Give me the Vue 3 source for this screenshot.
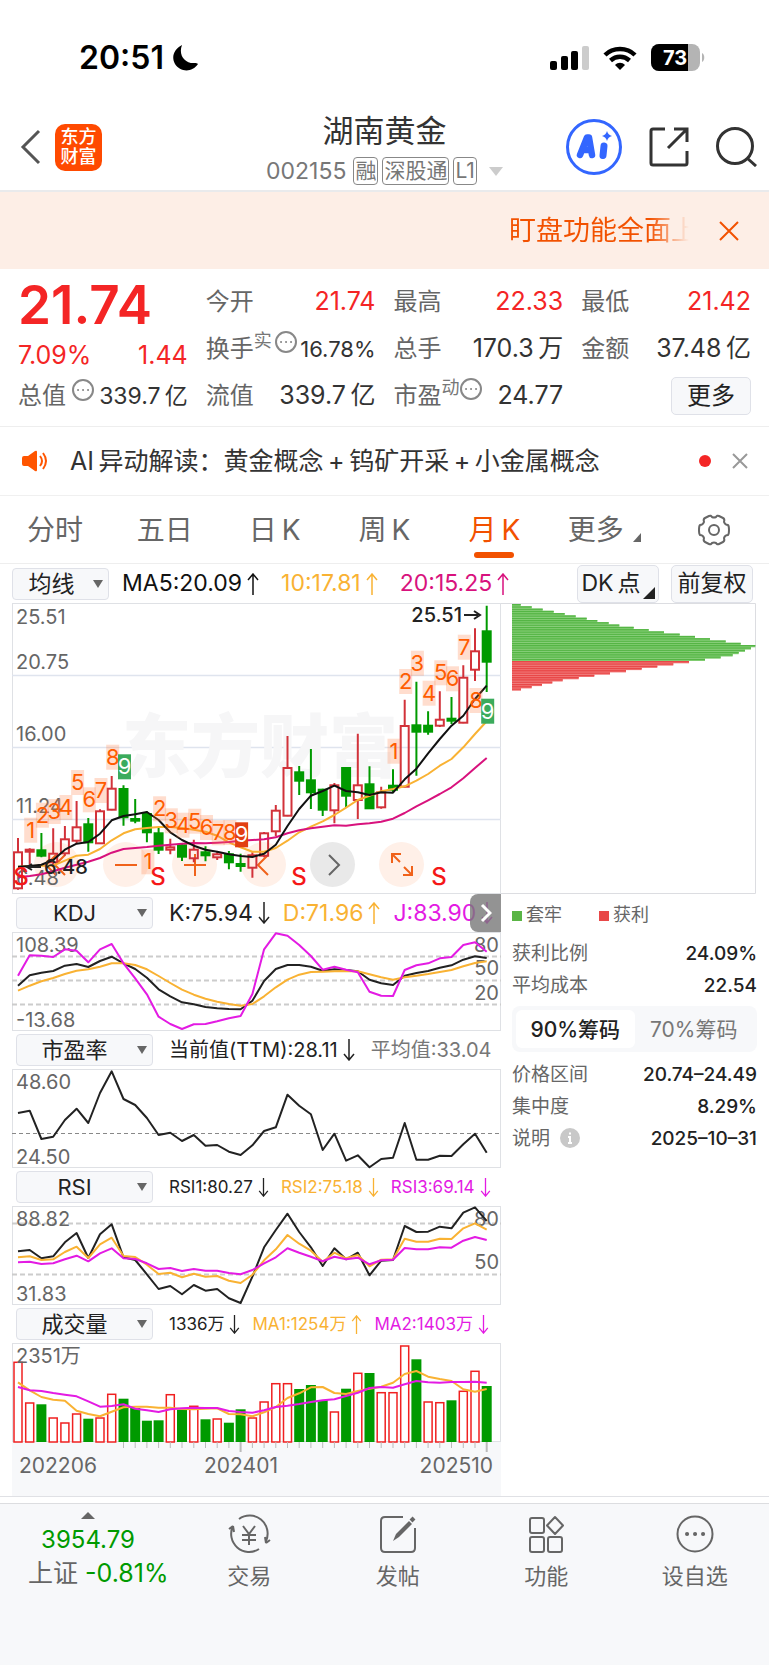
<script setup>
import { ref } from 'vue'

const COUNT = 41
const cx = (i) => 6 + (i * 468.7) / (COUNT - 1)
const fix = (n) => Math.round(n * 10) / 10
const toLine = (values, offset) =>
  values.map((v, i) => `${fix(cx(i))},${fix(v / 3 - offset)}`).join(' ')

// high, body top, body bottom, low, direction
const candleData = [
  [717, 760, 868, 872, 1], [748, 752, 758, 797, 1], [702, 754, 770, 775, 0], [688, 764, 790, 800, 1],
  [681, 721, 763, 770, 1], [606, 685, 725, 735, 1], [657, 676, 730, 758, 0], [631, 637, 733, 735, 1],
  [531, 569, 632, 634, 1], [559, 570, 655, 680, 0], [600, 660, 665, 673, 0], [637, 645, 700, 730, 0],
  [686, 703, 752, 765, 0], [719, 745, 752, 766, 1], [735, 739, 773, 786, 0], [722, 752, 778, 790, 1],
  [742, 760, 769, 787, 0], [758, 766, 775, 783, 1], [756, 766, 790, 811, 0], [764, 795, 801, 818, 0],
  [760, 769, 806, 836, 1], [699, 703, 770, 775, 1], [618, 635, 697, 712, 1], [411, 507, 650, 652, 1],
  [501, 520, 545, 588, 0], [450, 544, 580, 630, 0], [569, 572, 632, 651, 0], [552, 559, 634, 673, 1],
  [506, 507, 590, 627, 0], [404, 559, 603, 660, 1], [502, 556, 628, 629, 0], [563, 580, 625, 629, 1],
  [511, 560, 572, 580, 0], [302, 381, 563, 565, 1], [248, 379, 398, 530, 0], [337, 380, 398, 407, 0],
  [277, 362, 380, 384, 1], [294, 359, 365, 375, 0], [199, 236, 371, 373, 1], [88, 157, 212, 246, 1],
  [20, 97, 188, 279, 0],
]
const py = (v) => fix(v / 3 - 4)
const candles = candleData.map(([h, t, b, l, up], i) => ({
  x: fix(cx(i)), h: py(h), t: py(t), b: py(b), l: py(l), up: !!up,
}))

const priceLines = [
  { color: '#f9b233', pts: toLine([803, 801, 800, 800, 785, 770, 767, 750, 724, 703, 691, 687, 684, 684, 687, 692, 698, 710, 730, 745, 758, 758, 747, 725, 700, 683, 667, 648, 626, 603, 590, 577, 570, 562, 545, 525, 500, 480, 445, 405, 367], 4) },
  { color: '#d8127d', pts: toLine([835, 831, 826, 817, 806, 797, 788, 777, 761, 750, 747, 744, 740, 737, 734, 732, 733, 731, 729, 725, 723, 721, 715, 703, 694, 688, 683, 679, 680, 676, 673, 668, 659, 642, 622, 604, 585, 565, 538, 507, 477], 4) },
  { color: '#111', pts: toLine([803, 801, 797, 783, 752, 734, 729, 704, 664, 651, 646, 639, 663, 700, 723, 740, 752, 758, 766, 771, 774, 764, 737, 681, 630, 590, 576, 560, 576, 580, 588, 580, 581, 541, 509, 463, 420, 380, 350, 300, 260], 4) },
]

const marks = [
  [1, '1', 692], [2, '2', 647], [3, '3', 636], [4, '4', 624], [5, '5', 549], [6, '6', 601], [7, '7', 573],
  [8, '8', 473], [9, '9', 502, 'g'], [11, '1', 787], [12, '2', 628], [13, '3', 664], [14, '4', 677],
  [15, '5', 665], [16, '6', 684], [17, '7', 700], [18, '8', 699], [19, '9', 706, 'r'], [32, '1', 455],
  [33, '2', 246], [34, '3', 191], [35, '4', 281], [36, '5', 220], [37, '6', 238], [38, '7', 143],
  [39, '8', 303], [40, '9', 335, 'g'],
].map(([i, n, y, kind]) => ({ x: fix(cx(i) + 1), n, y: py(y), kind: kind || 'n' }))

const priceLabels = [['25.51', 21], ['20.75', 66], ['16.00', 138], ['11.24', 210], ['6.48', 282]]
const signals = [9, 146, 287, 427]

const panels = [
  {
    id: 'kdj', name: 'KDJ', size: 'lg', more: true,
    legend: [['K:75.94', 'down', 'dark'], ['D:71.96', 'up', 'amber'], ['J:83.90', 'down', 'violet']],
    dashes: [[24, 'd'], [48, 'd'], [72, 'd']],
    left: [['108.39', 20], ['-13.68', 95]],
    right: [['80', 20], ['50', 43], ['20', 68]],
    lines: [
      { color: '#222', pts: toLine([272, 241, 233, 228, 212, 207, 216, 198, 185, 205, 222, 248, 283, 304, 322, 328, 336, 340, 342, 343, 317, 258, 222, 210, 210, 215, 227, 223, 225, 229, 254, 265, 270, 242, 234, 228, 218, 211, 194, 184, 189], 37) },
      { color: '#f9b233', pts: toLine([287, 272, 259, 249, 237, 227, 223, 215, 205, 205, 210, 223, 243, 264, 284, 299, 311, 320, 327, 332, 327, 304, 277, 254, 239, 231, 230, 229, 228, 229, 238, 247, 254, 247, 242, 237, 231, 225, 214, 204, 199], 37) },
      { color: '#e31be3', pts: toLine([242, 181, 182, 186, 163, 167, 202, 163, 147, 205, 250, 298, 365, 387, 402, 388, 387, 379, 370, 363, 297, 163, 115, 122, 150, 183, 224, 215, 224, 232, 290, 302, 303, 225, 211, 205, 190, 186, 150, 142, 170], 37) },
    ],
  },
  {
    id: 'pe', name: '市盈率', size: 'md',
    legend: [['当前值(TTM):28.11', 'down', 'dark'], ['平均值:33.04', '', 'gray']],
    dashes: [[64, 'f']],
    left: [['48.60', 20], ['24.50', 95]],
    right: [],
    lines: [
      { color: '#222', pts: toLine([654, 647, 732, 725, 675, 641, 684, 594, 529, 612, 630, 669, 720, 713, 738, 720, 752, 750, 770, 780, 751, 708, 697, 599, 632, 658, 765, 716, 797, 781, 817, 792, 788, 684, 794, 794, 782, 783, 748, 716, 773], 174) },
    ],
  },
  {
    id: 'rsi', name: 'RSI', size: 'sm',
    legend: [['RSI1:80.27', 'down', 'dark'], ['RSI2:75.18', 'down', 'amber'], ['RSI3:69.14', 'down', 'violet']],
    dashes: [[17, 'd'], [68, 'd']],
    left: [['88.82', 20], ['31.83', 95]],
    right: [['80', 20], ['50', 63]],
    lines: [
      { color: '#222', pts: toLine([244, 240, 265, 259, 217, 189, 264, 193, 163, 262, 270, 313, 357, 348, 373, 345, 362, 357, 385, 399, 320, 232, 180, 131, 186, 232, 288, 235, 268, 248, 316, 272, 270, 168, 186, 185, 170, 175, 128, 112, 153], 36) },
      { color: '#f9b233', pts: toLine([262, 259, 270, 268, 246, 230, 264, 223, 203, 258, 261, 284, 312, 308, 322, 311, 320, 318, 332, 339, 314, 271, 238, 195, 221, 242, 275, 248, 265, 255, 289, 269, 268, 206, 215, 215, 206, 207, 175, 160, 179], 36) },
      { color: '#e31be3', pts: toLine([277, 275, 282, 280, 268, 257, 274, 250, 235, 265, 267, 280, 297, 294, 303, 297, 302, 302, 309, 313, 300, 280, 262, 235, 248, 260, 274, 260, 268, 263, 283, 271, 269, 234, 238, 238, 232, 233, 212, 201, 210], 36) },
    ],
  },
  {
    id: 'vol', name: '成交量', size: 'sm',
    legend: [['1336万', 'down', 'dark'], ['MA1:1254万', 'up', 'amber'], ['MA2:1403万', 'down', 'violet']],
    dashes: [],
    left: [['2351万', 20]],
    right: [],
    bars: [
      574, 696, 703, 741, 756, 729, 746, 741, 670, 686, 714, 752, 751, 671, 719, 706, 748, 744, 758, 718, 741,
      693, 638, 638, 657, 645, 690, 723, 656, 607, 609, 665, 665, 525, 568, 693, 695, 691, 661, 601, 648,
    ].map((v, i) => ({
      x: fix(cx(i)), y: fix(v / 3 - 173),
      up: ![2, 6, 9, 10, 11, 12, 14, 16, 18, 19, 24, 25, 26, 28, 30, 34, 37, 40].includes(i),
    })),
    lines: [
      { color: '#f9b233', pts: toLine([637, 661, 681, 689, 692, 722, 732, 739, 725, 712, 710, 710, 713, 713, 717, 718, 716, 715, 732, 733, 739, 727, 711, 684, 670, 652, 651, 669, 672, 663, 656, 650, 638, 612, 603, 620, 627, 633, 658, 665, 657], 173) },
      { color: '#e31be3', pts: toLine([651, 661, 663, 669, 674, 679, 694, 710, 708, 703, 716, 721, 726, 718, 715, 713, 714, 714, 723, 726, 728, 721, 711, 707, 702, 696, 691, 688, 678, 668, 654, 651, 653, 643, 633, 637, 638, 636, 636, 635, 638], 173) },
    ],
  },
]

const ticks = Array.from({ length: 32 }, (_, k) => k + 9).map((i) => ({
  x: fix(cx(i)), h: i === 19 || i === 40 ? 10 : 6,
}))

const chipEnds = [62, 95, 128, 161, 194, 227, 260, 292, 326, 358, 401, 446, 492, 539, 585, 630, 677, 722, 766, 753, 735, 716, 698, 662, 615, 567, 520, 472, 425, 378, 330, 283, 236, 188, 157, 126, 95, 63]
const chips = chipEnds.map((e, i) => ({ y: fix(1 + i * 2.28), w: fix((e - 36) / 3), red: i > 24 }))

const tabs = ['分时', '五日', '日\u2009K', '周\u2009K', '月\u2009K']
const activeTab = ref(tabs[4])
const chipTab = ref('90%筹码')
</script>

<template>
  <main class="app">
    <div class="status">
      <div class="clock">
        <span>20:51</span>
        <svg width="27" height="28" viewBox="0 0 27 28"><path d="M10 1C2 5-1 13 3 20c5 8 17 9 23 0-1-1-2-1-3-1C13 20 6 11 10 1Z" fill="#000" /></svg>
      </div>
      <div class="radios">
        <svg width="39" height="24" viewBox="0 0 39 24">
          <rect x="0" y="15" width="7" height="9" rx="2" /><rect x="11" y="10" width="7" height="14" rx="2" />
          <rect x="21" y="5" width="7" height="19" rx="2" /><rect x="32" y="0" width="7" height="24" rx="2" fill="#ccc" />
        </svg>
        <svg width="34" height="24" viewBox="0 0 34 24" fill="none" stroke="#000" stroke-width="4.4">
          <path d="M2 9C10 1 24 1 32 9" /><path d="M7.500 14.500C13 9.500 21 9.500 26.500 14.500" />
          <path d="M17 24l-5-5c3-3 7-3 10 0Z" fill="#000" stroke="none" />
        </svg>
        <svg class="battery" width="54" height="28" viewBox="0 0 54 28">
          <defs><clipPath id="cell"><rect width="49" height="27" rx="8" /></clipPath></defs>
          <g clip-path="url(#cell)"><rect width="49" height="27" fill="#b4b4b4" /><rect width="37" height="27" /></g>
          <path d="M51 9c3 1 3 8 0 9Z" fill="#b4b4b4" />
          <text x="24" y="21" text-anchor="middle">73</text>
        </svg>
      </div>
    </div>

    <header class="head">
      <div class="head-left">
        <button class="plain" aria-label="返回">
          <svg width="22" height="36" viewBox="0 0 22 36" fill="none" stroke="#555" stroke-width="3"><path d="M19 2L3 18l16 16" /></svg>
        </button>
        <a class="logo" href="#"><span>东方</span><span>财富</span></a>
      </div>
      <div class="title">
        <h1>湖南黄金</h1>
        <div class="code">
          <span>002155</span><i>融</i><i>深股通</i><i>L1</i>
          <svg width="14" height="9" viewBox="0 0 14 9"><path d="M0 0h14L7 9Z" fill="#ccc" /></svg>
        </div>
      </div>
      <div class="head-right">
        <button class="plain" aria-label="Ai">
          <svg width="56" height="56" viewBox="0 0 56 56">
            <circle cx="28" cy="28" r="26.500" fill="none" stroke="#3366ff" stroke-width="3" />
            <g fill="none" stroke="#3366ff" stroke-width="6.500" stroke-linejoin="round" stroke-linecap="round">
              <path d="M14 36L21 18.500h2L26 36M17 31h8" /><path d="M38 27l-1 9.500" stroke-width="7" />
            </g>
            <path d="M41 12q1 4 5 5-4 1-5 5-1-4-5-5 4-1 5-5Z" fill="#3366ff" />
          </svg>
        </button>
        <button class="plain" aria-label="分享">
          <svg width="40" height="40" viewBox="0 0 40 40" fill="none" stroke="#333" stroke-width="3">
            <path d="M16 2H4q-2 0-2 2v32q0 2 2 2h32q2 0 2-2V24M25 2h13v13M38 2L19 21" />
          </svg>
        </button>
        <button class="plain" aria-label="搜索">
          <svg width="41" height="40" viewBox="0 0 41 40" fill="none" stroke="#333" stroke-width="3"><circle cx="19" cy="19" r="17.500" /><path d="M31 31l9 8" /></svg>
        </button>
      </div>
    </header>

    <div class="banner">
      <span>盯盘功能全面上</span>
      <button class="plain" aria-label="关闭提示">
        <svg width="20" height="20" viewBox="0 0 20 20" stroke="#f25100" stroke-width="2"><path d="M1 1l18 18M19 1L1 19" /></svg>
      </button>
    </div>

    <section class="quote">
      <div class="col first">
        <strong>21.74</strong>
        <p class="red"><b>7.09%</b><b>1.44</b></p>
        <p class="tight">
          <span>总值</span>
          <svg class="dots" viewBox="0 0 22 22"><circle cx="11" cy="11" r="10" /><path d="M6 11h.1M11 11h.1M16 11h.1" /></svg>
          <b>339.7&#8201;亿</b>
        </p>
      </div>
      <div class="col">
        <p class="red"><span>今开</span><b>21.74</b></p>
        <p class="tight">
          <span>换手<sup>实</sup></span>
          <svg class="dots" viewBox="0 0 22 22"><circle cx="11" cy="11" r="10" /><path d="M6 11h.1M11 11h.1M16 11h.1" /></svg>
          <b>16.78%</b>
        </p>
        <p><span>流值</span><b>339.7&#8201;亿</b></p>
      </div>
      <div class="col">
        <p class="red"><span>最高</span><b>22.33</b></p>
        <p><span>总手</span><b>170.3&#8201;万</b></p>
        <p class="tight full">
          <span>市盈<sup>动</sup></span>
          <svg class="dots" viewBox="0 0 22 22"><circle cx="11" cy="11" r="10" /><path d="M6 11h.1M11 11h.1M16 11h.1" /></svg>
          <b>24.77</b>
        </p>
      </div>
      <div class="col">
        <p class="red"><span>最低</span><b>21.42</b></p>
        <p><span>金额</span><b>37.48&#8201;亿</b></p>
        <p class="end"><button class="box more">更多</button></p>
      </div>
    </section>

    <div class="notice">
      <svg width="26" height="22" viewBox="0 0 26 22">
        <path d="M0 8q0-2 2-2h4l7-5q2-1 2 1v18q0 2-2 1l-7-5H2q-2 0-2-2Z" fill="#ff5500" />
        <path d="M18 6q4 5 0 10M21 3q6 8 0 16" fill="none" stroke="#ff5500" stroke-width="2" />
      </svg>
      <p>AI&#8201;异动解读：黄金概念&#8201;+&#8201;钨矿开采&#8201;+&#8201;小金属概念</p>
      <i></i>
      <button class="plain" aria-label="关闭">
        <svg width="16" height="16" viewBox="0 0 16 16" stroke="#999" stroke-width="2"><path d="M1 1l14 14M15 1L1 15" /></svg>
      </button>
    </div>

    <nav class="tabs">
      <button v-for="t in tabs" :key="t" :class="{ on: t === activeTab }" @click="activeTab = t">{{ t }}</button>
      <button>更多<svg class="corner" width="8" height="9" viewBox="0 0 8 9"><path d="M8 0v9H0Z" fill="#666" /></svg></button>
      <button aria-label="设置">
        <svg width="34" height="32" viewBox="0 0 34 32" fill="none" stroke="#666" stroke-width="2" stroke-linejoin="round">
          <path d="M12 2q2-1 3 1 2 1 4 0 1-2 3-1l4 2q2 1 1 4 1 3 4 3 1 1 1 5t-1 5q-3 0-4 3 1 3-1 4l-4 2q-2 1-3-1-2-1-4 0-1 2-3 1l-4-2q-2-1-1-4-1-3-4-3-1-1-1-5t1-5q3 0 4-3-1-3 1-4Z" />
          <circle cx="17" cy="16" r="5" />
        </svg>
      </button>
    </nav>

    <div class="indicators">
      <label class="pick small"><select aria-label="均线"><option>均线</option></select></label>
      <div class="legend ma">
        <span class="black">MA5:20.09<svg class="arr" viewBox="0 0 12 22"><path d="M6 22V1M1 7l5-6 5 6" /></svg></span>
        <span class="amber">10:17.81<svg class="arr" viewBox="0 0 12 22"><path d="M6 22V1M1 7l5-6 5 6" /></svg></span>
        <span class="pink">20:15.25<svg class="arr" viewBox="0 0 12 22"><path d="M6 22V1M1 7l5-6 5 6" /></svg></span>
      </div>
      <button class="box dk">DK&#8201;点<svg width="12" height="12" viewBox="0 0 12 12"><path d="M12 0v12H0Z" fill="#222" /></svg></button>
      <button class="box fq">前复权</button>
    </div>

    <section class="board">
      <div class="charts">
        <div class="main-chart">
          <div class="tools">
            <button aria-label="最左"><svg viewBox="0 0 45 45"><path d="M22 13L12 23l10 10M31 13L21 23l10 10" /></svg></button>
            <button aria-label="缩小"><svg viewBox="0 0 45 45"><path d="M12 23h22" /></svg></button>
            <button aria-label="放大"><svg viewBox="0 0 45 45"><path d="M12 23h22M23 12v22" /></svg></button>
            <button aria-label="左移"><svg viewBox="0 0 45 45"><path d="M27 13L17 23l10 10" /></svg></button>
            <button class="off" aria-label="右移"><svg viewBox="0 0 45 45"><path d="M19 13l10 10-10 10" /></svg></button>
            <button aria-label="全屏"><svg viewBox="0 0 45 45"><path d="M13 21v-9h9M13 12l8 8M33 24v9h-9M33 33l-8-8" /></svg></button>
          </div>
          <svg class="plot" viewBox="0 0 489 291">
            <rect x=".5" y=".5" width="488" height="290" class="frame" />
            <path d="M0 72.500H489M0 144.500H489M0 216.500H489" stroke="#dfe4ee" stroke-width="1.500" />
            <text class="mark-bg" x="248" y="169" text-anchor="middle">东方财富</text>
            <text v-for="[t, y] in priceLabels" :key="t" class="axis" x="4" :y="y">{{ t }}</text>
            <g v-for="(c, i) in candles" :key="i" :stroke="c.up ? '#d2323a' : '#009a00'" stroke-width="2">
              <path :d="`M${c.x} ${c.h}V${c.t}M${c.x} ${c.b}V${c.l}`" />
              <rect :x="c.x - 4" :y="c.t" width="8" :height="Math.max(1, c.b - c.t)" :fill="c.up ? 'none' : '#009a00'" />
            </g>
            <polyline v-for="l in priceLines" :key="l.color" :points="l.pts" :stroke="l.color" class="line" />
            <g v-for="m in marks" :key="m.x" :class="['num', m.kind]">
              <rect :x="m.x - 6.5" :y="m.y - 12" width="13" height="25" />
              <text :x="m.x" :y="m.y + 8" text-anchor="middle">{{ m.n }}</text>
            </g>
            <text class="peak" x="32" y="271">6.48</text>
            <path d="M29 264H16M20 261l-5 3 5 3" fill="none" stroke="#222" stroke-width="2" />
            <text class="peak" x="450" y="19" text-anchor="end">25.51</text>
            <path d="M452 12H466M462 8l6 4-6 4" fill="none" stroke="#222" stroke-width="2" />
            <text v-for="x in signals" :key="x" class="sig" :x="x" y="282" text-anchor="middle">S</text>
          </svg>
        </div>

        <div v-for="p in panels" :key="p.id" class="panel">
          <div class="panel-head">
            <label class="pick"><select :aria-label="p.name"><option>{{ p.name }}</option></select></label>
            <div :class="['legend', p.size]">
              <span v-for="[t, dir, color] in p.legend" :key="t" :class="color">{{ t
                }}<svg v-if="dir" class="arr" viewBox="0 0 12 22"><path :d="dir === 'up' ? 'M6 22V1M1 7l5-6 5 6' : 'M6 0V21M1 15l5 6 5-6'" /></svg></span>
            </div>
            <button v-if="p.more" class="next" aria-label="更多指标">
              <svg width="12" height="20" viewBox="0 0 12 20" fill="none" stroke="#fff" stroke-width="3"><path d="M2 2l8 8-8 8" /></svg>
            </button>
          </div>
          <svg class="plot" viewBox="0 0 489 99">
            <rect x=".5" y=".5" width="488" height="98" class="frame" />
            <path v-for="[y, k] in p.dashes" :key="y" :d="`M0 ${y + 0.5}H489`" :class="k === 'd' ? 'dash' : 'dash fine'" />
            <template v-if="p.bars">
              <g v-for="b in p.bars" :key="b.x">
                <rect v-if="b.up" :x="b.x - 4" :y="b.y + 1" width="8" :height="98 - b.y" fill="#fff" stroke="#f02020" stroke-width="1.500" />
                <rect v-else :x="b.x - 5" :y="b.y" width="10" :height="99 - b.y" fill="#009a00" />
              </g>
            </template>
            <text v-for="[t, y] in p.left" :key="t" class="axis" x="4" :y="y">{{ t }}</text>
            <text v-for="[t, y] in p.right" :key="t" class="axis" x="487" :y="y" text-anchor="end">{{ t }}</text>
            <polyline v-for="l in p.lines" :key="l.color" :points="l.pts" :stroke="l.color" class="line" />
          </svg>
        </div>

        <div class="dates">
          <svg class="plot" viewBox="0 0 489 44">
            <path v-for="t in ticks" :key="t.x" :d="`M${t.x} 0v${t.h}`" stroke="#bbb" :stroke-width="t.h > 6 ? 2 : 1" />
            <text x="7" y="31">202206</text>
            <text x="229" y="31" text-anchor="middle">202401</text>
            <text x="481" y="31" text-anchor="end">202510</text>
          </svg>
        </div>
      </div>

      <aside class="side">
        <svg class="plot" viewBox="0 0 256 291">
          <path d="M0 .5H254.500V290.500H0" fill="none" stroke="#dcdde1" />
          <g v-for="c in chips" :key="c.y">
            <rect x="11" :y="c.y" :width="c.w" height="2.300" :fill="c.red ? '#f07070' : '#80cc70'" />
            <rect x="11" :y="c.y" :width="c.w" height="1.300" :fill="c.red ? '#e84848' : '#55b545'" />
          </g>
        </svg>
        <div class="side-body">
          <div class="key"><span class="g">套牢</span><span class="r">获利</span></div>
          <dl>
            <div><dt>获利比例</dt><dd>24.09%</dd></div>
            <div><dt>平均成本</dt><dd>22.54</dd></div>
          </dl>
          <div class="seg">
            <button v-for="s in ['90%筹码', '70%筹码']" :key="s" :class="{ on: s === chipTab }" @click="chipTab = s">{{ s }}</button>
          </div>
          <dl>
            <div><dt>价格区间</dt><dd>20.74–24.49</dd></div>
            <div><dt>集中度</dt><dd>8.29%</dd></div>
            <div><dt>说明 <svg width="20" height="20" viewBox="0 0 20 20"><circle cx="10" cy="10" r="10" fill="#c8c8c8" /><path d="M10 4.500v2M8 9h2v6M8 15h4" stroke="#fff" stroke-width="2" fill="none" /></svg></dt><dd>2025–10–31</dd></div>
          </dl>
        </div>
      </aside>
    </section>

    <footer class="foot">
      <a class="index" href="#">
        <svg viewBox="0 0 120 7"><path d="M53 7h14L60 0Z" fill="#666" /></svg>
        <b class="value">3954.79</b>
        <span>上证 <b>-0.81%</b></span>
      </a>
      <a href="#">
        <svg viewBox="0 0 44 40"><path d="M12 5a18 18 0 0 1 27 22M39 29l4-3M39 29l-1-6M32 35A18 18 0 0 1 6 12M6 12l-4 3M6 12l1 6" /><path d="M16 12l6 8 6-8M22 20v11M15 21h14M15 26h14" /></svg>
        <span>交易</span>
      </a>
      <a href="#">
        <svg viewBox="0 0 44 40"><path d="M27 3H9q-4 0-4 4v27q0 4 4 4h26q4 0 4-4V14" /><path d="M17 27l3-7L33 7l3 3-13 13Z" fill="#666" stroke="none" /><path d="M35 7l3-3" stroke-width="4" /></svg>
        <span>发帖</span>
      </a>
      <a href="#">
        <svg viewBox="0 0 44 40"><rect x="6" y="4" width="14" height="15" rx="2" /><rect x="6" y="23" width="14" height="15" rx="2" /><rect x="24" y="23" width="14" height="15" rx="2" /><path d="M31 3l8 8.500-8 8.500-8-8.500Z" stroke-linejoin="round" /></svg>
        <span>功能</span>
      </a>
      <a href="#">
        <svg viewBox="0 0 44 40"><circle cx="22" cy="20" r="17.500" /><path d="M14 20h.1M22 20h.1M30 20h.1" stroke-width="4" stroke-linecap="round" /></svg>
        <span>设自选</span>
      </a>
    </footer>
  </main>
</template>

<style>
body { background: #fff; }
</style>

<style scoped>
.app { font-family: Inter, "Noto Sans CJK SC", sans-serif; color: #333; font-size: 24px; line-height: 1; display: flex; flex-direction: column; min-height: 100vh; }
h1, p, dl, dd { margin: 0; font-weight: 400; }
b, i { font-weight: 400; font-style: normal; }
a { color: inherit; text-decoration: none; }
svg { display: block; flex: none; }
button { font: inherit; color: inherit; cursor: pointer; padding: 0; border: 0; background: none; }

.status { height: 96px; box-sizing: border-box; padding: 20px 64px 0 79px; display: flex; justify-content: space-between; align-items: center; }
.clock { display: flex; align-items: center; gap: 8px; font-size: 32px; font-weight: 600; color: #000; }
.radios { display: flex; align-items: center; gap: 14px; }
.battery text { font-size: 20px; font-weight: 700; fill: #fff; }

.head { display: grid; grid-template-columns: 1fr auto 1fr; align-items: center; height: 94px; border-bottom: 2px solid #e9eaec; padding: 0 12px; }
.head-left { display: flex; align-items: center; gap: 13px; padding: 8px 0 0 8px; }
.logo { display: flex; flex-direction: column; justify-content: center; align-items: center; gap: 2px; width: 47px; height: 47px; border-radius: 10px; background: #ff4a00; color: #fff; font-size: 18px; font-weight: 500; }
.title { display: flex; flex-direction: column; align-items: center; gap: 8px; padding-top: 12px; }
h1 { font-size: 31px; line-height: 36px; }
.code { display: flex; align-items: center; gap: 4px; color: #777; font-size: 23px; }
.code span { margin-right: 3px; }
.code i { border: 1px solid #888; border-radius: 4px; font-size: 21px; line-height: 26px; padding: 0 1px; }
.code svg { margin-left: 8px; }
.head-right { display: flex; align-items: center; justify-content: flex-end; gap: 27px; padding-top: 8px; }

.banner { height: 77px; background: #fdeee6; display: flex; align-items: center; justify-content: flex-end; gap: 30px; padding-right: 30px; }
.banner span { font-size: 27px; width: 180px; overflow: hidden; white-space: nowrap; line-height: 36px; color: transparent; background: linear-gradient(90deg, #f25100 78%, rgba(242, 81, 0, 0) 100%); background-clip: text; }

.quote { display: grid; grid-template-columns: repeat(4, minmax(0, 1fr)); gap: 18px; padding: 9px 18px 7px; border-bottom: 1px solid #eee; }
.col p { height: 47px; display: flex; align-items: center; justify-content: space-between; white-space: nowrap; }
.col span { color: #666; }
.col p b { font-size: 25px; }
.col p.red b { color: #f42525; }
.first strong { display: block; font-size: 53px; line-height: 54px; height: 54px; font-weight: 600; color: #f42525; }
.col.first p { height: 46px; }
.col.first .tight { height: 36px; }
.col .tight b { font-size: 22px; }
.col.first .tight b { font-size: 23px; }
.col .full b { font-size: 25px; margin-left: auto; }
.tight span { display: flex; }
sup { font-size: 18px; line-height: 18px; color: #777; vertical-align: baseline; align-self: flex-start; margin-top: -5px; }
.dots { width: 22px; height: 22px; fill: none; stroke: #888; stroke-width: 2; align-self: flex-start; stroke-linecap: round; margin-top: 6px; }
.first .dots { margin-top: 1px; }
.col p.end { justify-content: flex-end; }
.box { border: 1px solid #dfe1e8; border-radius: 5px; background: #f7f8fa; color: #222; height: 38px; }
.more { width: 80px; }

.notice { height: 68px; border-bottom: 1px solid #f0f0f0; display: flex; align-items: center; padding: 0 21px 0 22px; }
.notice p { flex: 1; margin-left: 22px; font-size: 25px; white-space: nowrap; }
.notice i { width: 12px; height: 12px; border-radius: 6px; background: #f42525; margin-right: 21px; }

.tabs { display: grid; grid-template-columns: repeat(7, 1fr); height: 67px; border-bottom: 1px solid #eee; }
.tabs button { font-size: 28px; color: #666; display: flex; align-items: center; justify-content: center; position: relative; white-space: nowrap; }
.tabs .on { color: #f25100; }
.tabs .on::after { content: ""; position: absolute; bottom: 5px; width: 40px; height: 6px; border-radius: 3px; background: #f25100; }
.corner { align-self: flex-end; margin: 0 0 21px 9px; }

.indicators { display: flex; align-items: center; padding: 0 16px 0 12px; height: 39px; }
.pick { position: relative; display: block; width: 137px; height: 32px; margin-left: 4px; flex: none; }
.pick select { appearance: none; box-sizing: border-box; width: 100%; height: 100%; border: 1px solid #dfe1e8; border-radius: 4px; background: #f7f8fa; font: inherit; font-size: 22px; line-height: 28px; color: #222; padding: 0 20px 0 0; text-align: center; text-align-last: center; }
.pick::after { content: ""; position: absolute; right: 6px; top: 12px; border: 5px solid transparent; border-top: 8px solid #666; border-bottom: 0; }
.small { width: 97px; margin-left: 0; }
.small select { font-size: 23px; padding: 0 18px 0 0; }
.legend { display: flex; align-items: center; white-space: nowrap; margin-left: 16px; gap: 12px; flex: 1; }
.legend span { display: flex; align-items: center; }
.legend.ma { font-size: 23px; gap: 22px; margin-left: 13px; }
.legend.lg { font-size: 23px; gap: 13px; }
.legend.md { font-size: 20px; gap: 16px; }
.legend.sm { font-size: 17px; }
.arr { width: 12px; height: 22px; fill: none; stroke: currentColor; stroke-width: 1.5; margin-left: 5px; }
.sm .arr { width: 11px; height: 19px; }
.black { color: #111; } .dark { color: #222; } .gray { color: #777; } .amber { color: #f9b233; } .pink { color: #d8127d; } .violet { color: #e31be3; }
.dk { width: 82px; display: flex; justify-content: center; align-items: center; gap: 2px; font-size: 23px; white-space: nowrap; }
.dk svg { align-self: flex-end; margin-bottom: 3px; }
.fq { width: 82px; margin-left: 12px; font-size: 23px; white-space: nowrap; }

.board { display: grid; grid-template-columns: minmax(0, 1fr) 256px; padding: 0 12px; border-bottom: 1px solid #e0e1e5; }
.plot { width: 100%; height: auto; overflow: visible; }
.main-chart { position: relative; }
.main-chart .plot { position: relative; pointer-events: none; }
.frame { fill: none; stroke: #dfe1e5; }
.axis { font-size: 20px; fill: #666; }
.mark-bg { font-size: 69px; font-weight: 900; fill: #f6f6f7; }
.line { fill: none; stroke-width: 2; stroke-linejoin: round; }
.num rect { fill: rgba(255, 120, 60, .25); }
.num text { font-size: 22px; fill: #ff5c00; }
.num.g rect { fill: #3bab5c; }
.num.r rect { fill: #e23f12; }
.num.g text, .num.r text { fill: #fff; }
.peak { font-size: 20px; font-weight: 500; fill: #222; }
.sig { font-size: 24px; font-weight: 500; fill: #f51818; }
.tools { position: absolute; left: 22px; bottom: 7px; display: flex; gap: 24px; }
.tools button { width: 45px; height: 45px; border-radius: 50%; background: #fff0e8; }
.tools svg { width: 45px; height: 45px; fill: none; stroke: #f0621a; stroke-width: 2; }
.tools .off { background: #e9e9e9; }
.tools .off svg { stroke: #666; }
.panel-head { position: relative; height: 38px; display: flex; align-items: center; }
.next { position: absolute; right: 0; top: 0; width: 31px; height: 38px; background: rgba(120, 120, 120, .8); border-radius: 8px 0 0 8px; display: flex; align-items: center; justify-content: center; }
.dash { stroke: #ccc; stroke-width: 2; stroke-dasharray: 5 3; }
.fine { stroke: #888; stroke-width: 1; stroke-dasharray: 4 3; }
.dates { background: #f7f8fa; padding-bottom: 10px; }
.dates text { font-size: 21px; fill: #666; }

.side-body { padding: 12px 0 0 11px; }
.key { display: flex; gap: 37px; font-size: 18px; color: #666; line-height: 18px; }
.key span::before { content: ""; display: inline-block; width: 10px; height: 10px; margin-right: 4px; }
.g::before { background: #5ab545; }
.r::before { background: #e84848; }
dl { padding: 13px 0 5px; font-size: 19px; }
.seg + dl { padding-top: 6px; }
dl div { display: flex; justify-content: space-between; align-items: center; height: 32px; white-space: nowrap; }
dt { color: #666; display: flex; align-items: center; gap: 10px; }
dd { font-weight: 500; color: #222; }
.seg { display: flex; height: 46px; padding: 4px; box-sizing: border-box; background: #f7f8fa; border-radius: 8px; }
.seg button { flex: 1; border-radius: 6px; font-size: 21px; color: #777; white-space: nowrap; }
.seg .on { background: #fff; color: #222; font-weight: 500; }

.foot { margin-top: 6px; flex: 1; min-height: 161px; border-top: 1px solid #dcdde0; background: #f7f8fa; display: grid; grid-template-columns: 175px repeat(4, 1fr); color: #666; font-size: 22px; box-sizing: border-box; }
.foot a { display: flex; flex-direction: column; align-items: center; padding-top: 10px; gap: 11px; white-space: nowrap; }
.foot a > svg { width: 44px; height: 40px; fill: none; stroke: #666; stroke-width: 2; }
.foot .index { gap: 9px; padding: 8px 0 0 28px; font-size: 25px; align-items: flex-start; }
.foot .index svg { width: 120px; height: 7px; stroke: none; }
.index .value { width: 120px; text-align: center; font-size: 24px; }
.index b { color: #009a00; }
</style>
